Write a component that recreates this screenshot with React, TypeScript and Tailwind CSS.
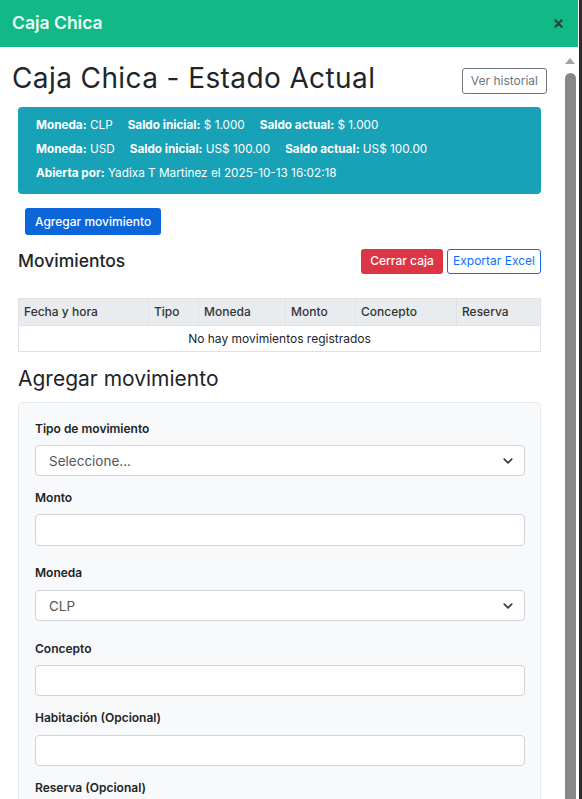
import React from "react";

const font = { fontFamily: "Inter, 'Noto Sans', sans-serif" };

function Chevron() {
  return (
    <svg width="10" height="10" viewBox="0 0 16 16" fill="none" className="text-[#343a40]">
      <path d="M2 5l6 6 6-6" stroke="currentColor" strokeWidth="2.6" strokeLinecap="round" strokeLinejoin="round" />
    </svg>
  );
}

function Field({
  label,
  select,
  top,
  gap = "mt-[7px]",
  height = "h-[31px]",
}: {
  label: string;
  select?: string;
  top: string;
  gap?: string;
  height?: string;
}) {
  return (
    <div className={top}>
      <div className="h-[18px] text-[12px] font-semibold leading-[18px] text-[#212529]">{label}</div>
      <div
        className={`${gap} flex ${height} items-center justify-between rounded-[4px] border border-[#ced4da] bg-white pl-[13px] pr-[11px] text-[13.5px] text-[#555]`}
      >
        <span>{select ?? ""}</span>
        {select && <Chevron />}
      </div>
    </div>
  );
}

export default function App() {
  const cols = [
    { name: "Fecha y hora", w: "w-[129px]" },
    { name: "Tipo", w: "w-[50px]" },
    { name: "Moneda", w: "w-[87px]" },
    { name: "Monto", w: "w-[70px]" },
    { name: "Concepto", w: "w-[101px]" },
    { name: "Reserva", w: "flex-1" },
  ];

  return (
    <div style={font} className="flex h-[799px] w-[582px] overflow-hidden bg-white text-[#212529]">
      <div className="flex w-[578px] flex-col">
        {/* modal header */}
        <div className="flex h-[47px] shrink-0 items-center justify-between bg-[#12b886] pl-[12px] pr-[15px]">
          <span className="text-[17.5px] font-semibold text-[#ecfff7]">Caja Chica</span>
          <svg width="9" height="9" viewBox="0 0 10 10">
            <path d="M1.5 1.5l7 7M8.5 1.5l-7 7" stroke="#1d4a3a" strokeWidth="2.4" strokeLinecap="round" />
          </svg>
        </div>

        <div className="flex min-h-0 flex-1">
          {/* body */}
          <div className="flex-1 pl-[12px] pr-[15px]">
            <div className="mt-[14px] flex items-start justify-between">
              <h1 className="text-[28px] font-normal leading-[34px] tracking-[0.4px] text-[#212529]">
                Caja Chica - Estado Actual
              </h1>
              <button className="mt-[7px] h-[26px] rounded-[3px] border border-[#6c757d] px-[8px] text-[12px] text-[#6c757d]">
                Ver historial
              </button>
            </div>

            <div className="px-[6px]">
              {/* info box */}
              <div className="mt-[12px] rounded-[4px] bg-[#17a2b8] pb-[8px] pl-[18px] pt-[7px] text-[11.75px] text-white">
                <div className="flex h-[24px] items-center gap-[15px]">
                  <span><b className="font-bold">Moneda:</b> CLP</span>
                  <span><b className="font-bold">Saldo inicial:</b> $ 1.000</span>
                  <span><b className="font-bold">Saldo actual:</b> $ 1.000</span>
                </div>
                <div className="flex h-[24px] items-center gap-[15px]">
                  <span><b className="font-bold">Moneda:</b> USD</span>
                  <span><b className="font-bold">Saldo inicial:</b> US$ 100.00</span>
                  <span><b className="font-bold">Saldo actual:</b> US$ 100.00</span>
                </div>
                <div className="flex h-[24px] items-center">
                  <span><b className="font-bold">Abierta por:</b> Yadixa T Martinez el 2025-10-13 16:02:18</span>
                </div>
              </div>

              <button className="ml-[7px] mt-[14px] h-[27px] rounded-[3px] bg-[#0b66d9] px-[10px] text-[12px] font-medium text-white">
                Agregar movimiento
              </button>

              {/* movimientos header */}
              <div className="mt-[13px] flex items-center justify-between">
                <h2 className="text-[17.5px] font-medium">Movimientos</h2>
                <div className="flex gap-[4px]">
                  <button className="h-[25px] w-[82px] rounded-[3px] bg-[#dc3545] text-[12px] font-medium text-white">
                    Cerrar caja
                  </button>
                  <button className="h-[25px] w-[94px] rounded-[3px] border border-[#0d6efd] bg-white text-[12px] text-[#0d6efd]">
                    Exportar Excel
                  </button>
                </div>
              </div>

              {/* table */}
              <div className="mt-[24px] border border-[#dee2e6] text-[12px]">
                <div className="flex h-[26px] bg-[#e9ecef]">
                  {cols.map((c, i) => (
                    <div
                      key={c.name}
                      className={`${c.w} flex items-center px-[5px] font-medium text-[#333] ${i > 0 ? "border-l border-[#dee2e6]" : ""}`}
                    >
                      {c.name}
                    </div>
                  ))}
                </div>
                <div className="flex h-[26px] items-center justify-center border-t border-[#dee2e6] text-[#212529]">
                  No hay movimientos registrados
                </div>
              </div>

              <h2 className="mt-[14px] text-[21px] font-normal leading-[26px]">Agregar movimiento</h2>

              {/* form card */}
              <div className="mt-[10px] h-[420px] rounded-[5px] border border-[#e9ecef] bg-[#f8f9fa] pl-[16px] pr-[15px] pt-[17px]">
                <Field label="Tipo de movimiento" select="Seleccione..." top="" />
                <Field label="Monto" top="mt-[13px]" height="h-[32px]" />
                <Field label="Moneda" select="CLP" top="mt-[18px]" gap="mt-[8px]" />
                <Field label="Concepto" top="mt-[19px]" />
                <Field label="Habitación (Opcional)" top="mt-[13px]" gap="mt-[8px]" />
                <Field label="Reserva (Opcional)" top="mt-[13px]" />
              </div>
            </div>
          </div>

          {/* scrollbar */}
          <div className="flex w-[16px] flex-col items-center bg-white">
            <svg width="10" height="6" viewBox="0 0 10 6" className="mt-[11px]">
              <path d="M0 6L5 0l5 6z" fill="#a3a3a3" />
            </svg>
            <div className="ml-[1px] mt-[9px] w-[11px] flex-1 rounded-t-full bg-[#888]" />
          </div>
        </div>
      </div>
      <div className="w-[1px] bg-white" />
      <div className="w-[3px] bg-[#2b2b2b]" />
    </div>
  );
}
